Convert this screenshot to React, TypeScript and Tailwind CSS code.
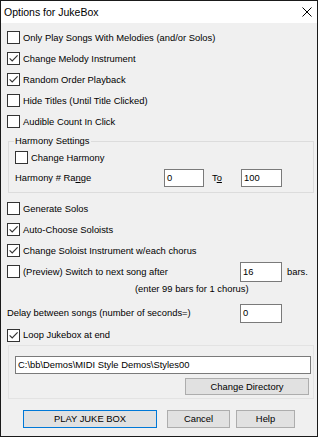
import React from "react";

const Box = ({ checked = false }: { checked?: boolean }) => (
  <span className="w-[13px] h-[13px] border border-[#333333] bg-white shrink-0 flex items-center justify-center">
    {checked && (
      <svg width="11" height="11" viewBox="0 0 11 11">
        <path d="M1.6 5.4 L4.2 8 L9.6 2.4" fill="none" stroke="#333333" strokeWidth="1.15" />
      </svg>
    )}
  </span>
);

const Check = ({ label, checked = false }: { label: React.ReactNode; checked?: boolean }) => (
  <div className="h-[21px] flex items-center">
    <Box checked={checked} />
    <span className="ml-[3px] whitespace-nowrap">{label}</span>
  </div>
);

const Edit = ({ value, w, h = "h-[18px]" }: { value: string; w: string; h?: string }) => (
  <div className={`${w} ${h} bg-white border border-[#7a7a7a] flex items-center pl-[2px] shrink-0 whitespace-nowrap`}>{value}</div>
);

export default function App() {
  return (
    <div className="w-[318px] h-[437px] border border-[#1a1a1a] bg-[#f0f0f0] flex flex-col text-black [font-family:'Liberation_Sans',Arial,sans-serif] text-[9.4px] leading-[12px] overflow-hidden">
      <div className="h-[22px] bg-white flex items-center justify-between pl-[3px] pr-[5px] shrink-0">
        <span className="text-[10.5px]">Options for JukeBox</span>
        <svg width="10" height="10" viewBox="0 0 10 10">
          <path d="M0.5 0.5 L9.5 9.5 M9.5 0.5 L0.5 9.5" stroke="#000" strokeWidth="1" fill="none" />
        </svg>
      </div>
      <div className="flex flex-col pl-[6px] pt-[4px]">
        <Check label="Only Play Songs With Melodies (and/or Solos)" />
        <Check label="Change Melody Instrument" checked />
        <Check label="Random Order Playback" checked />
        <Check label="Hide Titles (Until Title Clicked)" />
        <Check label="Audible Count In Click" />

        <fieldset className="mt-[3px] ml-[1px] w-[306px] border border-[#dcdcdc] pb-[4px]">
          <legend className="ml-[5px] px-[1px] leading-[12px]">Harmony Settings</legend>
          <div className="pl-[6px] flex flex-col">
            <Check label="Change Harmony" />
            <div className="h-[20px] flex items-center">
              <span className="w-[149px]">
                Harmony # Ra<span className="underline">n</span>ge
              </span>
              <Edit value="0" w="w-[40px]" />
              <span className="w-[37px] pl-[8px]">
                T<span className="underline">o</span>
              </span>
              <Edit value="100" w="w-[41px]" />
            </div>
          </div>
        </fieldset>

        <div className="mt-[5px] flex flex-col">
          <Check label="Generate Solos" />
          <Check label="Auto-Choose Soloists" checked />
          <Check label="Change Soloist Instrument w/each chorus" checked />
          <div className="h-[21px] flex items-center">
            <Box />
            <span className="w-[220px] pl-[3px] whitespace-nowrap">(Preview) Switch to next song after</span>
            <Edit value="16" w="w-[42px]" h="h-[20px]" />
            <span className="ml-[5px]">bars.</span>
          </div>
          <div className="h-[14px] flex items-center pl-[128px]">(enter 99 bars for 1 chorus)</div>
          <div className="mt-[7px] h-[20px] flex items-center">
            <span className="w-[233px] whitespace-nowrap">Delay between songs (number of seconds=)</span>
            <Edit value="0" w="w-[42px]" h="h-[19px]" />
          </div>
          <div className="mt-[2px] h-[20px] flex items-center">
            <Box checked />
            <span className="ml-[3px]">Loop Jukebox at end</span>
          </div>
        </div>

        <div className="w-[306px] ml-[1px] border border-[#e3e3e3] pt-[10px] pb-[3px] pl-[6px] flex flex-col">
          <Edit value="C:\bb\Demos\MIDI Style Demos\Styles00" w="w-[296px]" h="h-[18px]" />
          <div className="flex justify-end pr-[4px] mt-[4px]">
            <div className="w-[124px] h-[17px] bg-[#e1e1e1] border border-[#adadad] flex items-center justify-center">Change Directory</div>
          </div>
        </div>

        <div className="mt-[11px] flex items-center pl-[16px]">
          <div className="w-[134px] h-[18px] bg-[#e1e1e1] border border-[#0078d7] flex items-center justify-center">PLAY JUKE BOX</div>
          <div className="ml-[10px] w-[63px] h-[18px] bg-[#e1e1e1] border border-[#adadad] flex items-center justify-center">Cancel</div>
          <div className="ml-[6px] w-[59px] h-[18px] bg-[#e1e1e1] border border-[#adadad] flex items-center justify-center">Help</div>
        </div>
      </div>
    </div>
  );
}
